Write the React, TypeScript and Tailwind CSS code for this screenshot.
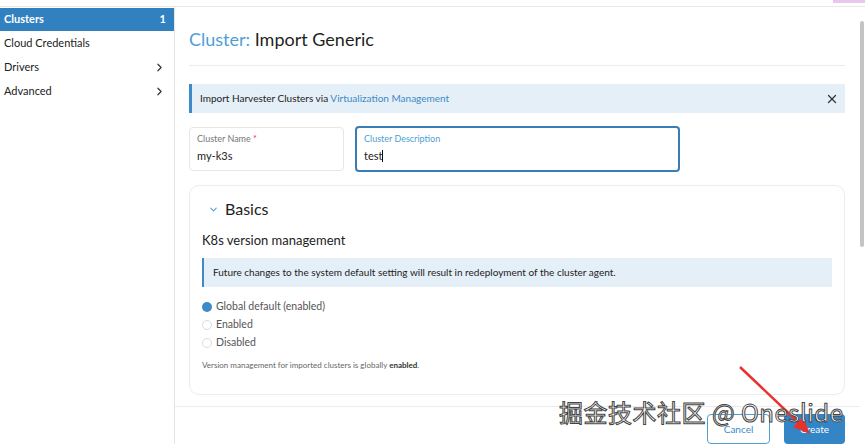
import React from 'react';
import { ChevronRight, ChevronDown, X } from 'lucide-react';

const navItems = [
  { label: 'Cloud Credentials', arrow: false },
  { label: 'Drivers', arrow: true },
  { label: 'Advanced', arrow: true },
];

const radios = [
  { label: 'Global default (enabled)', checked: true },
  { label: 'Enabled', checked: false },
  { label: 'Disabled', checked: false },
];

export default function App() {
  return (
    <div className="relative w-[865px] h-[444px] overflow-hidden bg-white font-['Lato',sans-serif] text-[#222]">
      <div className="h-[7px] border-b border-[#e8e8e8]" />
      <div className="flex h-[437px]">
        {/* sidebar */}
        <aside className="w-[175px] shrink-0 border-r border-[#e4e4e4]">
          <div className="flex items-center justify-between h-[23px] mt-px pl-1 pr-2 bg-[#3181c0] text-white text-[11px] font-bold">
            <span>Clusters</span>
            <span>1</span>
          </div>
          {navItems.map((item) => (
            <div
              key={item.label}
              className="flex items-center justify-between h-[24px] pl-1 pr-2 text-[11px] text-[#222]"
            >
              <span>{item.label}</span>
              {item.arrow && <ChevronRight size={13} strokeWidth={2.2} className="text-[#333]" />}
            </div>
          ))}
        </aside>

        {/* main */}
        <main className="flex-1 flex flex-col min-w-0">
          <div className="flex-1 pl-[14px] pr-[15px]">
            <h1 className="pt-[20px] pb-[14px] text-[18px] leading-[24px] border-b border-[#ececec]">
              <span className="text-[#4d9fd6]">Cluster: </span>
              <span className="text-[#1f1f1f]">Import Generic</span>
            </h1>

            <div className="mt-[18px] h-[29px] flex items-center justify-between bg-[#e5eff8] border-l-[3px] border-[#3d8ac6] pl-[8px] pr-[6px] text-[10px]">
              <span>
                Import Harvester Clusters via{' '}
                <span className="text-[#3d8ac6]">Virtualization Management</span>
              </span>
              <X size={14} strokeWidth={2.2} className="text-[#333]" />
            </div>

            <div className="flex gap-[11px] mt-[14px]">
              <div className="w-[155px] h-[44px] border border-[#e6e6e6] rounded-[4px] px-[7px] pt-[5px]">
                <div className="text-[9px] text-[#777] leading-[12px]">
                  Cluster Name <span className="text-[#d33]">*</span>
                </div>
                <div className="text-[11px] mt-[4px] leading-[14px]">my-k3s</div>
              </div>
              <div className="w-[325px] h-[46px] -mt-px border-2 border-[#3a7db4] rounded-[4px] px-[7px] pt-[5px]">
                <div className="text-[9px] text-[#4d9fd6] leading-[12px]">Cluster Description</div>
                <div className="text-[11px] mt-[4px] leading-[14px] flex items-center">
                  test<span className="inline-block w-px h-[12px] bg-[#111]" />
                </div>
              </div>
            </div>

            <section className="mt-[13px] h-[210px] border border-[#ececec] rounded-[10px] px-[12px] pt-[13px]">
              <div className="flex items-center gap-[6px] pl-[6px]">
                <ChevronDown size={11} strokeWidth={2.2} className="text-[#4d9fd6]" />
                <span className="text-[16px] leading-[20px] text-[#222]">Basics</span>
              </div>
              <div className="mt-[13px] text-[13px] leading-[16px]">K8s version management</div>
              <div className="mt-[10px] h-[29px] flex items-center bg-[#e5eff8] border-l-[2px] border-[#3d8ac6] pl-[9px] text-[10px]">
                Future changes to the system default setting will result in redeployment of the cluster agent.
              </div>
              <div className="mt-[13px] flex flex-col gap-[5px]">
                {radios.map((r) => (
                  <label key={r.label} className="flex items-center gap-[4px] text-[10.5px] leading-[13px] text-[#555]">
                    <span
                      className={
                        r.checked
                          ? 'w-[10px] h-[10px] rounded-full bg-[#3d8ac6]'
                          : 'w-[10px] h-[10px] rounded-full border border-[#dcdcdc] bg-white'
                      }
                    />
                    {r.label}
                  </label>
                ))}
              </div>
              <p className="mt-[10px] text-[8px] text-[#666]">
                Version management for imported clusters is globally <b className="text-[#333]">enabled</b>.
              </p>
            </section>
          </div>

          <footer className="h-[38px] border-t border-[#ececec] flex justify-end items-end gap-[14px] pr-[15px]">
            <button className="w-[63px] h-[30px] border border-[#4d9fd6] rounded-[4px] bg-white text-[10px] text-[#3d8ac6]">
              Cancel
            </button>
            <button className="w-[61px] h-[30px] rounded-[4px] bg-[#3385c6] text-[10px] text-white">
              Create
            </button>
          </footer>
        </main>

        {/* scrollbar */}
        <div className="w-[5px] shrink-0 pt-[14px]">
          <div className="w-[4px] h-[226px] rounded-full bg-[#c4c4c4]" />
        </div>
      </div>

      {/* overlays */}
      <svg className="absolute left-0 top-0 pointer-events-none" width="865" height="444">
        <line x1="740" y1="367" x2="800" y2="424" stroke="#e8322b" strokeWidth="2.5" />
        <polygon points="810,434 793,427 803,417" fill="#e8322b" />
      </svg>
      <div className="absolute left-[559px] top-[397px] text-[24px] leading-[30px] text-white font-['Noto_Sans_CJK_SC',sans-serif] [-webkit-text-stroke:1px_#444] tracking-[0.5px] pointer-events-none whitespace-nowrap">
        掘金技术社区 @ Oneslide
      </div>
      <div className="absolute right-0 top-0 w-[32px] h-[3px] bg-[#e8c8ec]" />
    </div>
  );
}
